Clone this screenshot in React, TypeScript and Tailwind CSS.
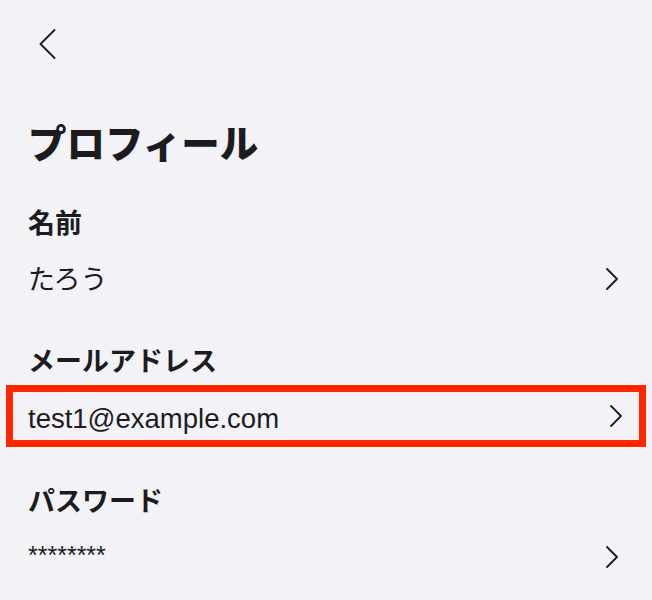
const FONT = "font-['Liberation_Sans','Noto_Sans_CJK_JP',sans-serif]";

function ChevronRight() {
  return (
    <svg width="12" height="22" viewBox="0 0 12 22" fill="none">
      <path d="M1 1 L11 11 L1 21" stroke="#1c1c1e" strokeWidth="1.8" strokeLinecap="round" strokeLinejoin="round" />
    </svg>
  );
}

function ChevronLeft() {
  return (
    <svg width="17" height="30" viewBox="0 0 17 30" fill="none">
      <path d="M15.5 1 L1.5 15 L15.5 29" stroke="#1c1c1e" strokeWidth="1.8" strokeLinecap="round" strokeLinejoin="round" />
    </svg>
  );
}

type Item = { label: string; value: string; highlight?: boolean; secret?: boolean };

const items: Item[] = [
  { label: "名前", value: "たろう" },
  { label: "メールアドレス", value: "test1@example.com", highlight: true },
  { label: "パスワード", value: "********", secret: true },
];

export default function App() {
  return (
    <div className={`min-h-screen w-full bg-[#f2f2f7] text-[#1c1c1e] ${FONT}`}>
      <div className="h-[88px] flex items-center pl-[39px]">
        <ChevronLeft />
      </div>
      <h1 className="mt-[29px] h-[56px] leading-[56px] pl-[28px] text-[38.5px] font-black">プロフィール</h1>
      <div className="mt-[33px] flex flex-col gap-[37px]">
        {items.map((it) => (
          <div key={it.label} className="flex flex-col">
            <div className="h-[36px] leading-[36px] pl-[28px] text-[27px] font-bold">{it.label}</div>
            {it.highlight ? (
              <div className="mt-[5px] mx-[6px] h-[62px] border-[7px] border-[#ff2600] flex items-center justify-between pl-[15px] pr-[17px]">
                <span className="text-[27.5px] leading-[36px] mt-[5px]">{it.value}</span>
                <ChevronRight />
              </div>
            ) : (
              <div className="mt-[9px] h-[56px] flex items-center justify-between pl-[28px] pr-[34px]">
                <span className={it.secret ? "text-[25px] leading-[36px] -mt-[4px]" : "text-[27px] leading-[36px] mt-[2px]"}>{it.value}</span>
                <ChevronRight />
              </div>
            )}
          </div>
        ))}
      </div>
    </div>
  );
}
